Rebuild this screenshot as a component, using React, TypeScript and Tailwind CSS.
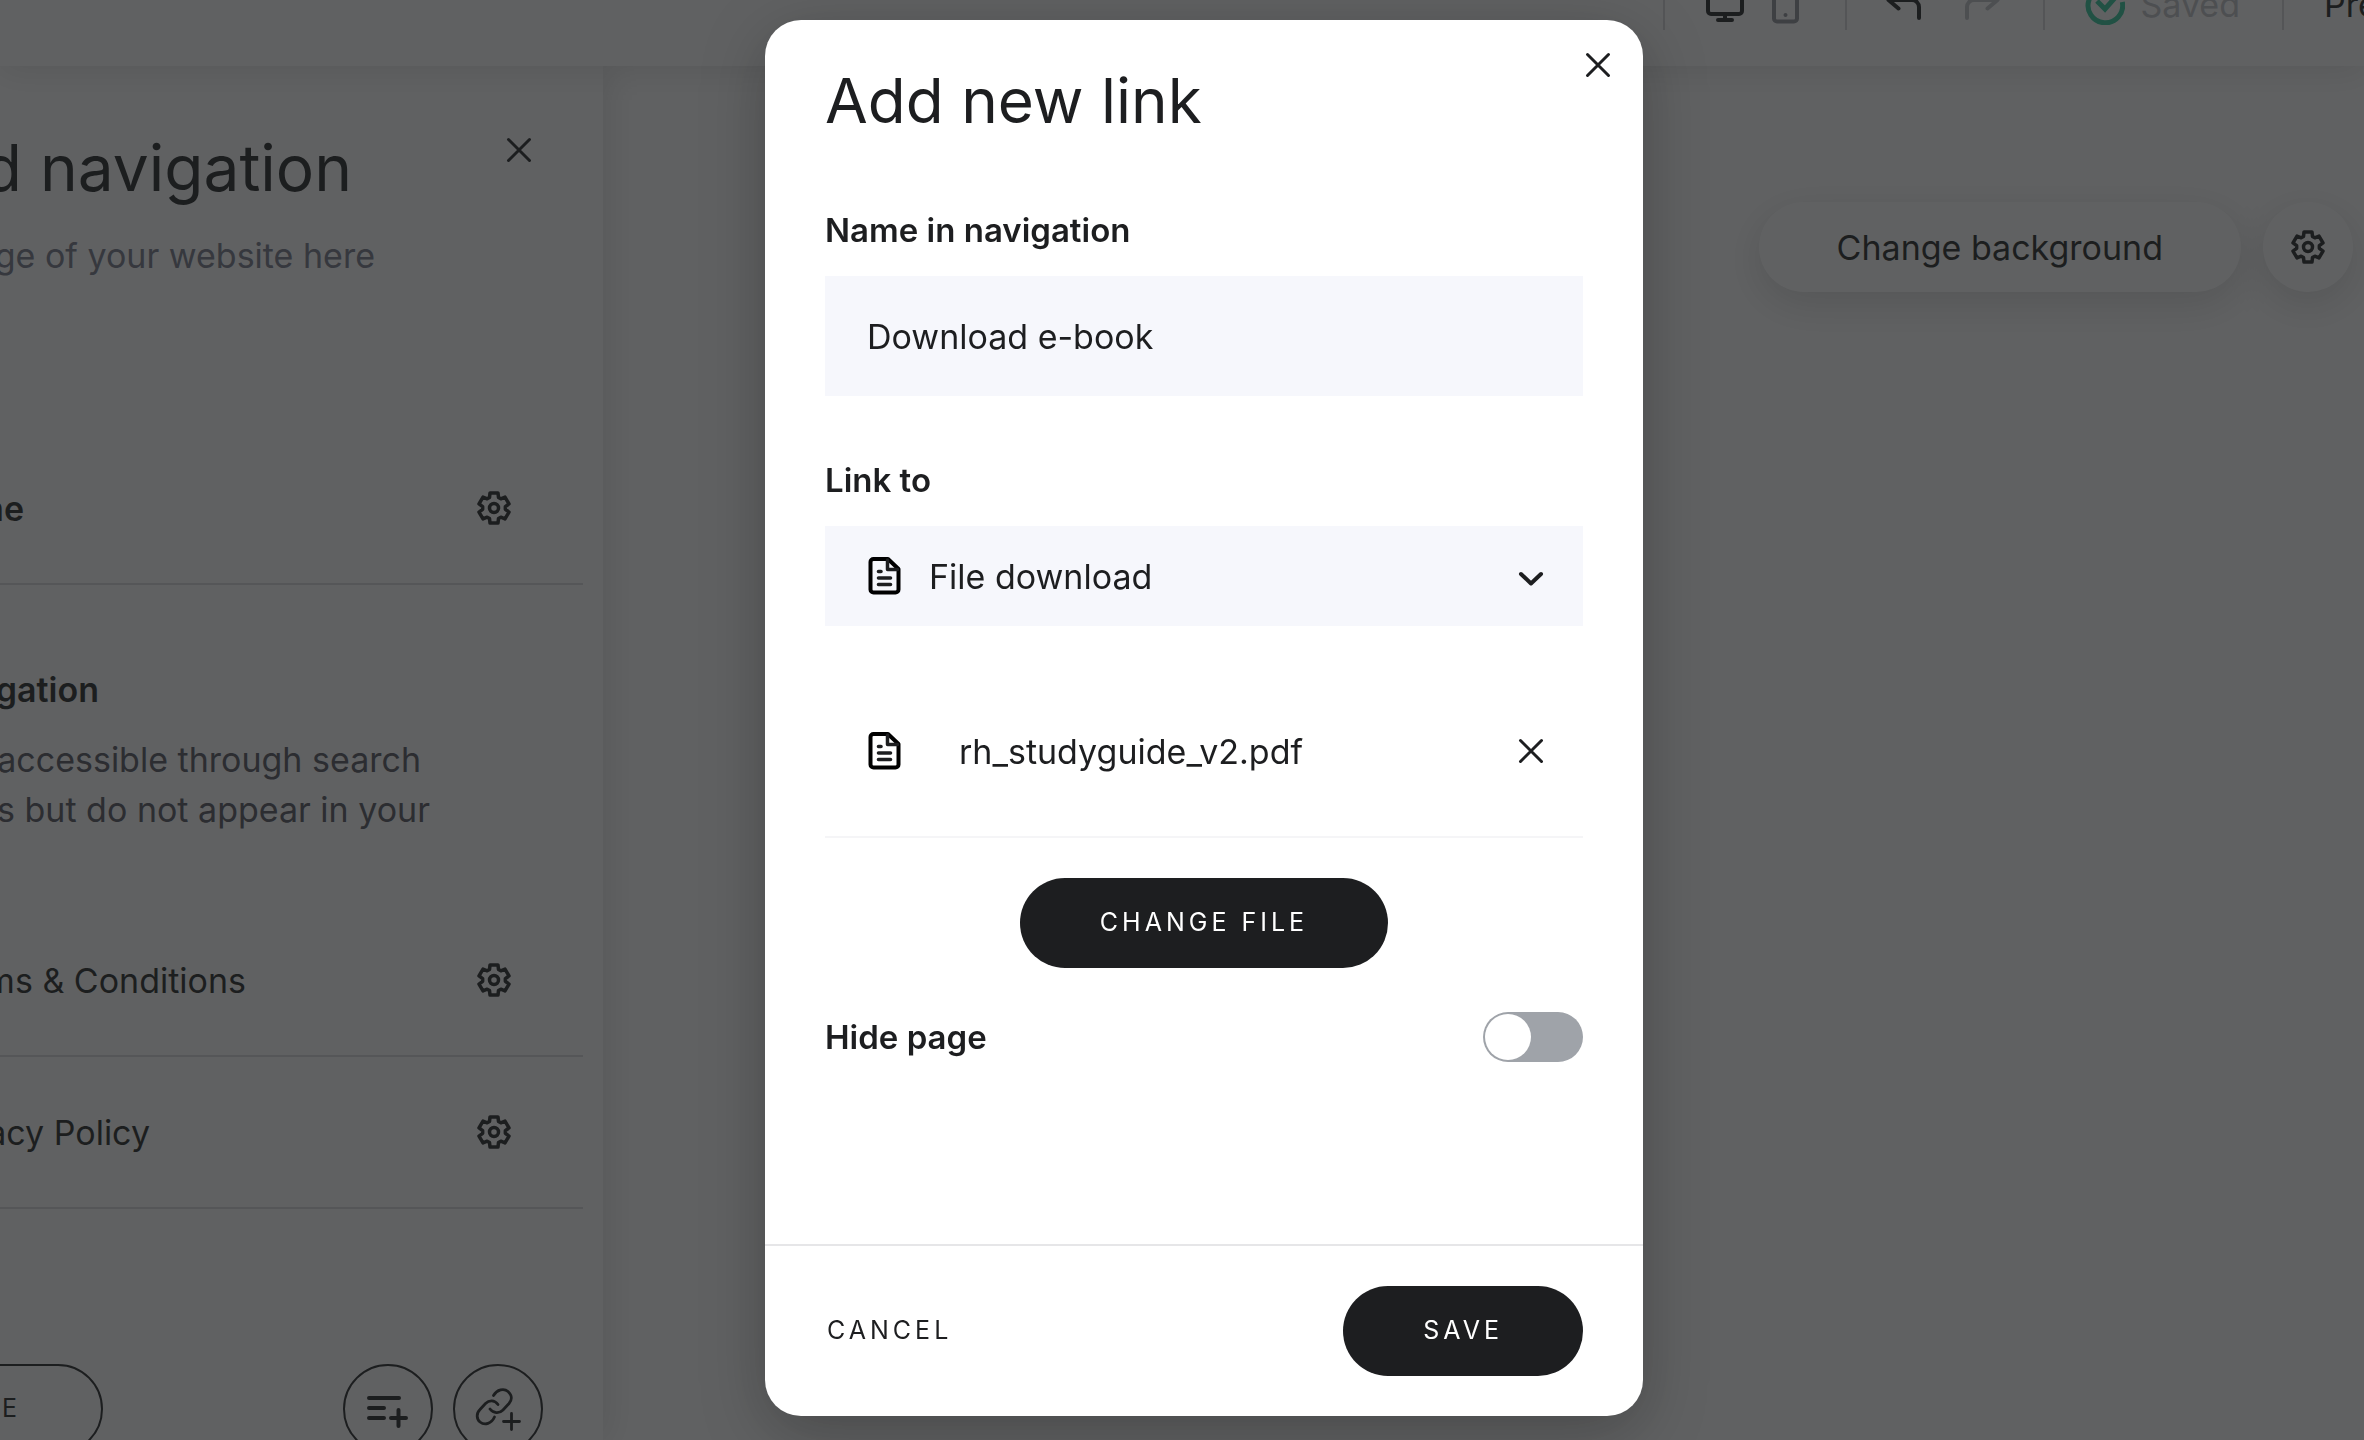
import { useState } from "react";

const GEAR_POINTS = [0, 60, 120, 180, 240, 300].map((deg) => {
    const a = (deg * Math.PI) / 180;
    const tooth = [[-4.5, -10.5], [-4, -15], [4, -15], [4.5, -10.5]];
    return tooth.map(([x, y]) => {
        const px = 18 + x * Math.cos(a) - y * Math.sin(a);
        const py = 18 + x * Math.sin(a) + y * Math.cos(a);
        return px.toFixed(2) + "," + py.toFixed(2);
    }).join(" ");
}).join(" ");

function GearIcon() {
    return (
        <svg width="36" height="36" viewBox="0 0 36 36" fill="none" stroke="currentColor" strokeWidth="3.5" strokeLinejoin="round">
            <polygon points={GEAR_POINTS} />
            <circle cx="18" cy="18" r="4.5" />
        </svg>
    )
}

function CloseIcon() {
    return (
        <svg width="28" height="28" viewBox="0 0 28 28" fill="none" stroke="currentColor" strokeWidth="3" strokeLinecap="round">
            <path d="M3.5 3.5l21 21M24.500 3.5l-21 21" />
        </svg>
    )
}

function FileIcon() {
    return (
        <svg className="shrink-0" width="36" height="40" viewBox="0 0 36 40" fill="none" strokeLinecap="round" strokeLinejoin="round">
            <path d="M6.500 3H21L31.500 13V33.500a3 3 0 0 1-3 3H6.500a3 3 0 0 1-3-3V6a3 3 0 0 1 3-3Z" stroke="#000000" strokeWidth="4" />
            <path d="M20.500 4v9.500H30.500" stroke="#1d1e20" strokeWidth="3.5" />
            <path d="M11.500 15.500h2.500M11.500 22h12M11.500 28.500h12" stroke="#1d1e20" strokeWidth="3.6" />
        </svg>
    )
}

function ChevronIcon() {
    return (
        <svg className="shrink-0 pointer-events-none" width="28" height="28" viewBox="0 0 28 28" fill="none" stroke="currentColor" strokeWidth="4" strokeLinecap="round" strokeLinejoin="round">
            <path d="M4 12l10 9.500 10-9.500" />
        </svg>
    )
}

function UndoIcon({ className }: { className?: string }) {
    return (
        <svg className={className} width="40" height="40" viewBox="0 0 40 40" fill="none" stroke="currentColor" strokeWidth="4" strokeLinecap="round" strokeLinejoin="round">
            <path d="M36 33V22a7 7 0 0 0-7-7H6M15 5.500L5.500 15l10 8.500" />
        </svg>
    )
}

function Divider() {
    return <span className="w-[2px] h-[50px] bg-[#d5d6da]" />
}

function TopBar() {
    return (
        <header className="relative z-10 -mt-14 h-[122px] shrink-0 flex items-center justify-end bg-white shadow-[0_4px_32px_rgba(0,0,0,0.12)] whitespace-nowrap">
            <Divider />
            <button aria-label="Desktop" className="ml-10">
                <svg width="40" height="40" viewBox="0 0 40 40" fill="none" stroke="currentColor" strokeWidth="4" strokeLinecap="round" strokeLinejoin="round">
                    <rect x="3" y="2" width="34" height="27" rx="3" />
                    <path d="M20 29v6M13 35h14" />
                </svg>
            </button>
            <button aria-label="Mobile" className="ml-[26px] text-[#8d8f98]">
                <svg width="28" height="40" viewBox="0 0 28 40" fill="none" stroke="currentColor" strokeWidth="4" strokeLinecap="round" strokeLinejoin="round">
                    <rect x="3" y="2" width="23" height="34.5" rx="3" />
                    <path d="M14.500 30v.1" />
                </svg>
            </button>
            <span className="ml-[46px]" />
            <Divider />
            <button aria-label="Undo" className="ml-9"><UndoIcon /></button>
            <button aria-label="Redo" className="ml-10 text-[#bfc1c7]"><UndoIcon className="-scale-x-100" /></button>
            <span className="ml-10" />
            <Divider />
            <svg className="ml-10" width="40" height="40" viewBox="0 0 40 40" fill="none" stroke="#2cc99a" strokeWidth="5">
                <path d="M30.500 6.500A17.300 17.300 0 1 0 37.300 17" />
                <path d="M12 16l8 8L36 6" />
            </svg>
            <span className="ml-4 text-[34px] leading-10 text-[#bfc1c7]">Saved</span>
            <span className="ml-[42px]" />
            <Divider />
            <button className="ml-10 w-10 flex justify-start leading-10">Preview</button>
        </header>
    )
}

function NavRow({ name, textClass }: { name: string, textClass: string }) {
    return (
        <li className="h-[152px] w-[583px] flex items-center border-b-2 border-[#d9dade] whitespace-nowrap">
            <span className={"flex justify-end " + textClass}>{name}</span>
            <button aria-label={name + " settings"} className="ml-auto mr-[71px]"><GearIcon /></button>
        </li>
    )
}

function NavigationPanel() {
    return (
        <aside className="w-[603px] shrink-0 bg-white shadow-[4px_0_32px_rgba(0,0,0,0.12)] whitespace-nowrap">
            <div className="flex pt-[66px]">
                <h2 className="w-[352px] flex justify-end text-[64px] leading-[72px]">and navigation</h2>
                <button aria-label="Close panel" className="ml-auto mr-[70px] mt-1 h-7"><CloseIcon /></button>
            </div>
            <p className="mt-[27px] w-[375px] flex justify-end leading-[50px] text-[#727586]">page of your website here</p>

            <ul className="mt-[152px]">
                <NavRow name="Home" textClass="w-6 font-semibold" />
            </ul>

            <h3 className="mt-20 w-[99px] flex justify-end leading-[50px] font-semibold">navigation</h3>
            <p className="mt-5 leading-[50px] text-[#50525c]">
                <span className="w-[421px] flex justify-end">accessible through search</span>
                <span className="w-[430px] flex justify-end">results but do not appear in your</span>
            </p>

            <ul className="mt-[70px]">
                <NavRow name="Terms & Conditions" textClass="w-[246px]" />
                <NavRow name="Privacy Policy" textClass="w-[150px]" />
            </ul>

            <div className="mt-[155px] flex">
                <button className="-ml-40 w-[263px] h-[90px] pr-20 rounded-full border-2 border-[#1d1e20] text-right text-[25px] tracking-[4px]">PAGE</button>
                <button aria-label="Add section" className="ml-auto size-[90px] flex items-center justify-center rounded-full border-2 border-[#1d1e20]">
                    <svg width="44" height="44" viewBox="0 0 44 44" fill="none" stroke="currentColor" strokeWidth="4" strokeLinecap="round">
                        <path d="M3 11h30M3 21h15M3 31h15M25 31h15M32.500 23v16" />
                    </svg>
                </button>
                <button aria-label="Add link" className="ml-5 mr-[60px] size-[90px] flex items-center justify-center rounded-full border-2 border-[#1d1e20]">
                    <svg width="46" height="46" viewBox="0 0 46 46" fill="none" stroke="currentColor" strokeWidth="2.8" strokeLinecap="round">
                        <path d="M18.500 9.500C22 3.500 29 2 33 5.500c4.500 4 4 8.500 1 12l-6 6.500c-4 4-9.500 3.500-13-1" />
                        <path d="M23 18.500c-3.500-5-9-4.500-12.500-1L5 23.500c-4 4-3.500 9.500 0 12.500 5 4 11.500 1.500 14.500-5" />
                        <path d="M28.500 35.500h16M36.500 27.500v16" />
                    </svg>
                </button>
            </div>
        </aside>
    )
}

function AddLinkModal() {
    const [name, setName] = useState("Download e-book");
    const [linkTo, setLinkTo] = useState("file");
    const [hidden, setHidden] = useState(false);

    return (
        <div role="dialog" aria-label="Add new link" className="relative w-[878px] bg-white rounded-[36px] shadow-[0_16px_64px_rgba(0,0,0,0.25)]">
            <button aria-label="Close" className="absolute top-[31px] right-[31px]"><CloseIcon /></button>
            <form className="px-[60px] pt-[45px] pb-[182px] flex flex-col">
                <h1 className="text-[62px] leading-[72px]">Add new link</h1>

                <label htmlFor="name" className="mt-[73px] text-[33px] leading-10 font-semibold">Name in navigation</label>
                <input id="name" className="mt-[26px] h-[120px] px-[42px] bg-[#f6f7fc]" value={name} onChange={(e) => setName(e.currentTarget.value)} />

                <label htmlFor="link_to" className="mt-16 text-[33px] leading-10 font-semibold">Link to</label>
                <div className="mt-[26px] h-[100px] pl-[42px] pr-[38px] flex items-center bg-[#f6f7fc]">
                    <FileIcon />
                    <select id="link_to" className="ml-[26px] flex-1 h-full appearance-none bg-transparent" value={linkTo} onChange={(e) => setLinkTo(e.currentTarget.value)}>
                        <option value="file">File download</option>
                    </select>
                    <ChevronIcon />
                </div>

                <div className="mt-10 h-[172px] pl-[42px] pr-[38px] flex items-center border-b-2 border-[#f5f5f7]">
                    <FileIcon />
                    <span className="ml-14 flex-1">rh_studyguide_v2.pdf</span>
                    <button type="button" aria-label="Remove file"><CloseIcon /></button>
                </div>

                <button type="button" className="mt-10 h-[90px] px-20 self-center rounded-full bg-[#1d1e20] text-white text-[25px] tracking-[4px]">CHANGE FILE</button>

                <div className="mt-11 flex items-center justify-between">
                    <label htmlFor="hide_page" className="text-[33px] leading-10 font-semibold">Hide page</label>
                    <input
                        id="hide_page"
                        type="checkbox"
                        role="switch"
                        checked={hidden}
                        onChange={(e) => setHidden(e.currentTarget.checked)}
                        className="appearance-none w-[100px] h-[50px] p-[2px] flex rounded-full bg-[#9fa3a9] checked:justify-end checked:bg-[#1d1e20] before:size-[46px] before:rounded-full before:bg-white"
                    />
                </div>
            </form>

            <footer className="px-[60px] py-10 flex items-center justify-between border-t-2 border-[#e6e6e8]">
                <button className="h-[90px] pl-[2px] text-[25px] tracking-[4px]">CANCEL</button>
                <button className="h-[90px] px-20 rounded-full bg-[#1d1e20] text-white text-[25px] tracking-[4px]">SAVE</button>
            </footer>
        </div>
    )
}

export default function App() {
    return (
        <div className="h-screen overflow-hidden flex flex-col bg-white font-['Inter',sans-serif] text-[34px] text-[#1d1e20]">
            <TopBar />
            <div className="flex-1 min-h-0 flex">
                <NavigationPanel />
                <main className="flex-1 flex items-start justify-end gap-[22px] pt-[136px] pr-[11px]">
                    <button className="h-[90px] px-[78px] rounded-full bg-white shadow-[0_12px_40px_rgba(0,0,0,0.15)]">Change background</button>
                    <button aria-label="Section settings" className="size-[90px] flex items-center justify-center rounded-full bg-white shadow-[0_12px_40px_rgba(0,0,0,0.15)]"><GearIcon /></button>
                </main>
            </div>
            <div className="fixed inset-0 z-20 flex items-start justify-center pt-5 pl-11 bg-[#1d1e20]/70">
                <AddLinkModal />
            </div>
        </div>
    )
}
